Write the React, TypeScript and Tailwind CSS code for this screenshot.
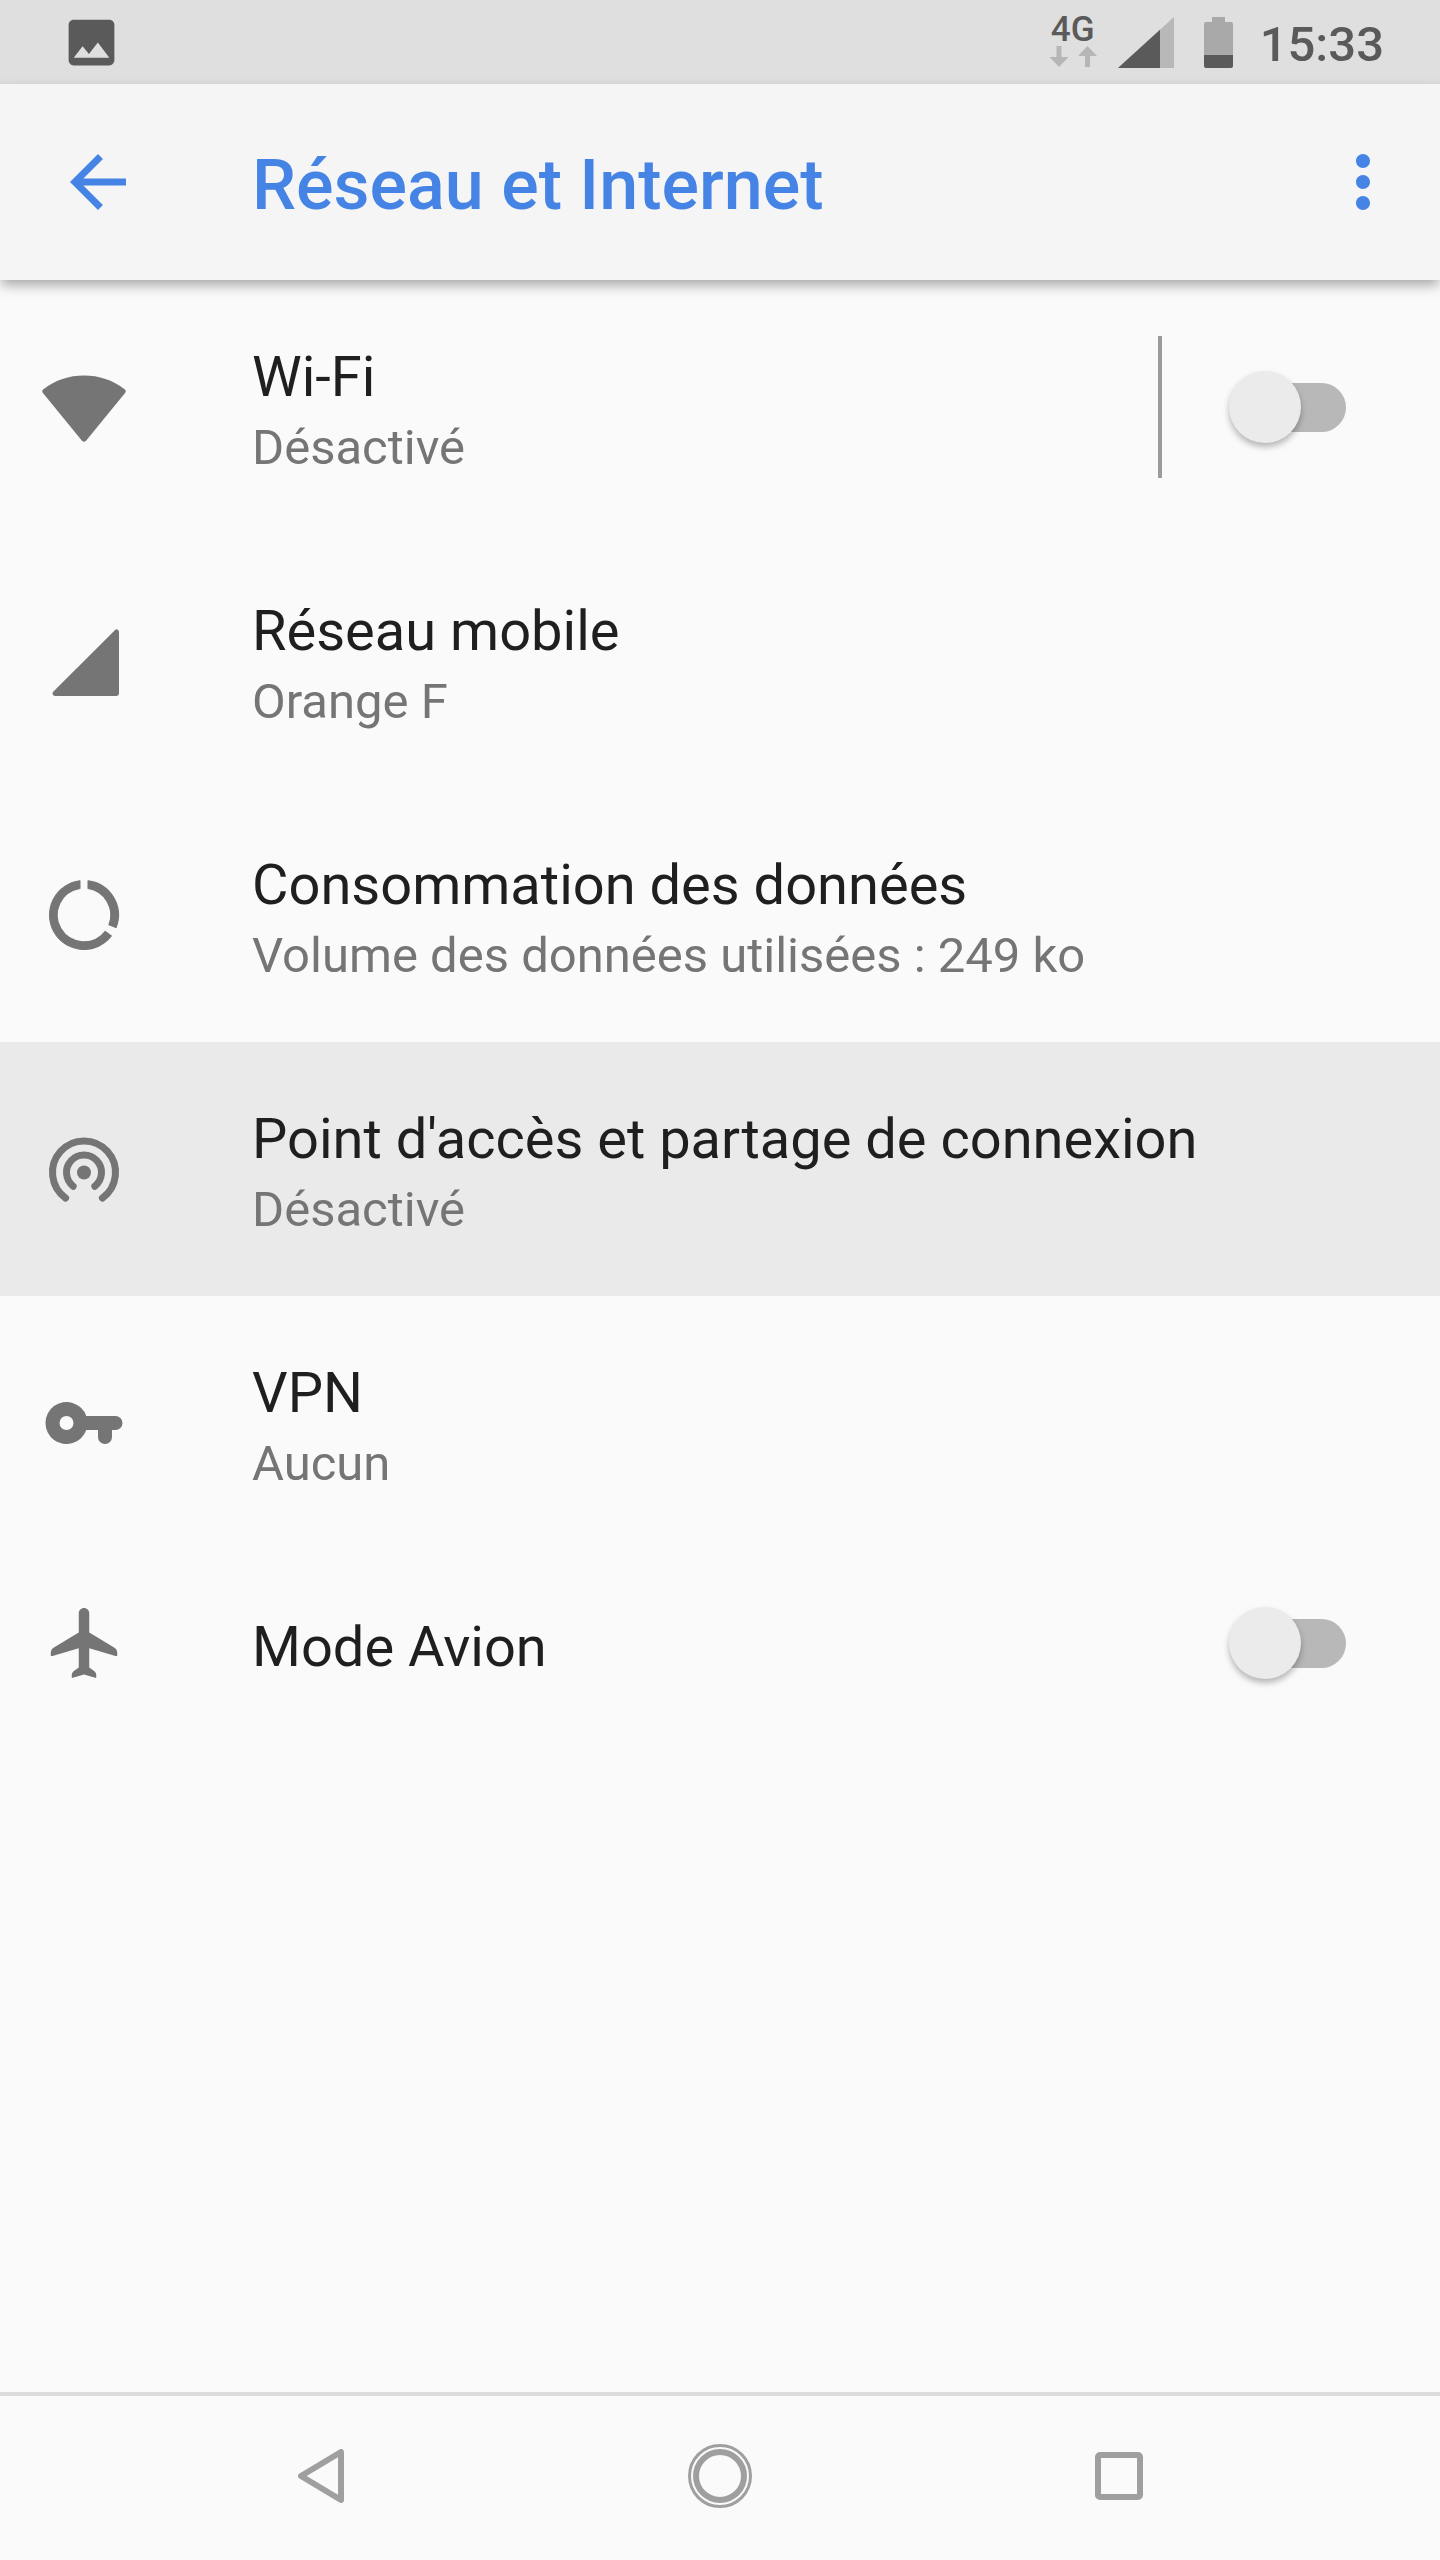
import { useState } from "react";
import type { ReactNode } from "react";

const FONT = "font-['Roboto','Noto_Sans',sans-serif]";

function Icon({ children, className = "size-[84px]" }: { children: ReactNode; className?: string }) {
  return (
    <svg viewBox="0 0 24 24" fill="currentColor" aria-hidden="true" className={`${className} shrink-0`}>
      {children}
    </svg>
  );
}

const icons = {
  wifi: (
    <path
      d="M12 21.15.85 7.5A18.36 18.36 0 0 1 23.15 7.5Z"
      stroke="currentColor"
      strokeWidth="1.5"
      strokeLinejoin="round"
    />
  ),
  signal: (
    <path
      d="M21.3 3.7V21.3H3.7Z"
      stroke="currentColor"
      strokeWidth="1.4"
      strokeLinejoin="round"
    />
  ),
  data: (
    <path
      d="M13.15 2.22A9.85 9.85 0 0 1 21.16 15.61L19.12 14.8A7.65 7.65 0 0 0 13.15 4.44ZM10.85 2.22A9.85 9.85 0 1 0 19.81 18L18.07 16.66A7.65 7.65 0 1 1 10.85 4.44Z"
      stroke="currentColor"
      strokeWidth="0.3"
      strokeLinejoin="round"
    />
  ),
  hotspot: (
    <>
      <path
        d="M6.75 20.3A9 9 0 1 1 17.25 20.3M8.9 16.92A5 5 0 1 1 15.1 16.92"
        fill="none"
        stroke="currentColor"
        strokeWidth="2"
        strokeLinecap="round"
      />
      <circle cx="12" cy="13" r="2" />
    </>
  ),
  key: (
    <path
      fillRule="evenodd"
      d="M12.65 10A6 6 0 1 0 12.65 14H16v2a2 2 0 0 0 4 0v-2h1a2 2 0 0 0 0-4ZM7 10a2 2 0 1 1 0 4 2 2 0 0 1 0-4Z"
    />
  ),
  plane: (
    <path d="M21.5 15.4v-.5c0-.7-.35-1.25-.9-1.6L13.5 9V3.5C13.5 2.67 12.83 2 12 2s-1.5.67-1.5 1.5V9l-7.1 4.3c-.55.35-.9.9-.9 1.6v.5c0 .3.2.4.5.3l7.5-2.2V19l-1.3.95c-.45.35-.7.75-.7 1.3v.5c0 .2.1.25.3.2L12 21l3.2.95c.2.05.3 0 .3-.2v-.5c0-.55-.25-.95-.7-1.3L13.5 19v-5.5l7.5 2.2c.3.1.5 0 .5-.3Z" />
  ),
};

function Switch({ id, label, checked, onChange }: {
  id: string;
  label?: string;
  checked: boolean;
  onChange: (value: boolean) => void;
}) {
  return (
    <input
      id={id}
      type="checkbox"
      role="switch"
      aria-label={label}
      checked={checked}
      onChange={(e) => onChange(e.target.checked)}
      className="mr-[94px] grid h-[72px] w-[117px] shrink-0 cursor-pointer appearance-none items-center
        before:col-start-1 before:row-start-1 before:h-[49px] before:w-24 before:justify-self-end before:rounded-full before:bg-[#b8b8b8] before:content-['']
        after:col-start-1 after:row-start-1 after:size-[72px] after:rounded-full after:bg-[#ebebeb] after:shadow-[0_4px_6px_rgba(0,0,0,0.28)] after:content-['']
        checked:before:bg-[#a0c2f0] checked:after:justify-self-end checked:after:bg-[#4584e4]"
    />
  );
}

function RowText({ icon, title, summary }: { icon: ReactNode; title: string; summary?: string }) {
  return (
    <>
      <span className="w-[210px] shrink-0 text-[#757575]">
        <Icon>{icon}</Icon>
      </span>
      <span className="flex min-w-0 flex-1 flex-col pt-[60px] pb-[52px]">
        <span className="text-[56px] leading-[74px] text-[#1f1f1f]">{title}</span>
        {summary && <span className="text-[49px] leading-[68px] text-[#757575]">{summary}</span>}
      </span>
    </>
  );
}

const links = [
  { icon: icons.signal, title: "Réseau mobile", summary: "Orange F" },
  { icon: icons.data, title: "Consommation des données", summary: "Volume des données utilisées : 249 ko" },
  { icon: icons.hotspot, title: "Point d'accès et partage de connexion", summary: "Désactivé", pressed: true },
  { icon: icons.key, title: "VPN", summary: "Aucun" },
];

function StatusBar() {
  return (
    <div className="flex h-[84px] items-center bg-[#dfdfdf] pr-14 pl-[61px] text-[#5a5a5a]">
      <Icon className="size-[61px]">
        <path d="M21 19V5c0-1.1-.9-2-2-2H5c-1.1 0-2 .9-2 2v14c0 1.1.9 2 2 2h14c1.1 0 2-.9 2-2zM8.5 13.5l2.5 3.01L14.5 12l4.5 6H5l3.5-4.5z" />
      </Icon>
      <div className="ml-auto flex items-center">
        <div className="flex flex-col items-center pb-1">
          <span className="text-[35px] leading-8 font-medium">4G</span>
          <svg viewBox="0 0 48 21" className="h-[21px] w-12 text-[#b6b6b6]" fill="currentColor" aria-hidden="true">
            <path d="M7.5 0h5v11H19.5L10 21 .5 11h7ZM36 21h5V10h7L38.5 0 29 10h7Z" />
          </svg>
        </div>
        <svg viewBox="0 0 56 51" className="ml-[21px] h-[51px] w-14" aria-hidden="true">
          <path d="M56 0V51H0Z" fill="#b8b8b8" />
          <path d="M42 12.75V51H0Z" fill="currentColor" />
        </svg>
        <svg viewBox="0 0 29 51" className="ml-[30px] h-[51px] w-[29px]" aria-hidden="true">
          <path d="M8 0h13v5h6a2 2 0 0 1 2 2v31H0V7a2 2 0 0 1 2-2h6Z" fill="#a9a9a9" />
          <path d="M0 38h29v11a2 2 0 0 1-2 2H2a2 2 0 0 1-2-2Z" fill="currentColor" />
        </svg>
        <time className="ml-[27px] pt-1.5 text-[49px] leading-[58px] font-medium">15:33</time>
      </div>
    </div>
  );
}

function NavBar() {
  const button = "flex flex-1 items-center justify-center";
  return (
    <nav className="flex h-[168px] border-t-4 border-[#dcdcdc] px-[122px] pb-1 text-[#9f9f9f]">
      <button type="button" aria-label="Retour" className={button}>
        <svg viewBox="0 0 48 54" className="h-[54px] w-12" fill="none" stroke="currentColor" strokeWidth="6" strokeLinejoin="round">
          <path d="M44 3V51L4 27Z" />
        </svg>
      </button>
      <button type="button" aria-label="Accueil" className={button}>
        <svg viewBox="0 0 64 64" className="size-16" fill="none" stroke="currentColor">
          <circle cx="32" cy="32" r="30.5" strokeWidth="3" />
          <circle cx="32" cy="32" r="24" strokeWidth="6" />
        </svg>
      </button>
      <button type="button" aria-label="Applications récentes" className={button}>
        <span className="size-12 rounded-[5px] border-6 border-current" />
      </button>
    </nav>
  );
}

export default function App() {
  const [wifi, setWifi] = useState(false);
  const [airplane, setAirplane] = useState(false);

  return (
    <div className={`flex min-h-screen flex-col bg-[#fafafa] ${FONT}`}>
      <StatusBar />

      <header className="relative flex h-[196px] items-center bg-[#f5f5f5] pr-[35px] pl-14 text-[#4584e4] shadow-[0_6px_12px_-1px_rgba(0,0,0,0.34)]">
        <button type="button" aria-label="Revenir en arrière" className="w-[196px] shrink-0">
          <Icon>
            <path d="M20 11H7.83l5.59-5.59L12 4l-8 8 8 8 1.41-1.41L7.83 13H20v-2z" />
          </Icon>
        </button>
        <h1 className="flex-1 pt-1.5 text-[70px] leading-[82px] font-medium">Réseau et Internet</h1>
        <button type="button" aria-label="Plus d'options" className="shrink-0">
          <Icon>
            <path d="M12 8c1.1 0 2-.9 2-2s-.9-2-2-2-2 .9-2 2 .9 2 2 2zm0 2c-1.1 0-2 .9-2 2s.9 2 2 2 2-.9 2-2-.9-2-2-2zm0 6c-1.1 0-2 .9-2 2s.9 2 2 2 2-.9 2-2-.9-2-2-2z" />
          </Icon>
        </button>
      </header>

      <main className="flex-1">
        <ul>
          <li className="flex items-center">
            <a href="#wifi" className="flex flex-1 items-center pl-[42px]">
              <RowText icon={icons.wifi} title="Wi-Fi" summary={wifi ? "Activé" : "Désactivé"} />
            </a>
            <span className="mr-[67px] h-[142px] w-1 bg-[#9b9b9b]" />
            <Switch id="wifi-switch" label="Wi-Fi" checked={wifi} onChange={setWifi} />
          </li>
          {links.map((row) => (
            <li key={row.title}>
              <a href="#" className={`flex items-center pl-[42px] ${row.pressed ? "bg-[#eaeaea]" : ""}`}>
                <RowText icon={row.icon} title={row.title} summary={row.summary} />
              </a>
            </li>
          ))}
          <li className="flex items-center">
            <label htmlFor="airplane-switch" className="flex flex-1 items-center pl-[42px]">
              <RowText icon={icons.plane} title="Mode Avion" />
            </label>
            <Switch id="airplane-switch" checked={airplane} onChange={setAirplane} />
          </li>
        </ul>
      </main>

      <NavBar />
    </div>
  );
}
